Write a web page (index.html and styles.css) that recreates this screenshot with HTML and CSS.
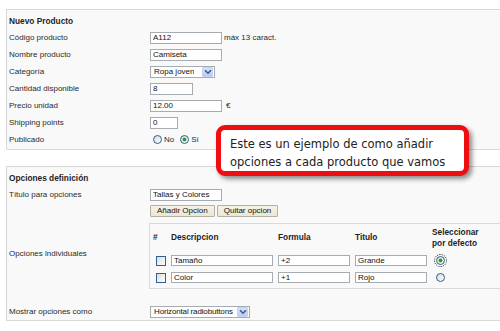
FILE: index.html
```html
<!DOCTYPE html>
<html lang="es">
<head>
<meta charset="utf-8">
<title>Nuevo Producto</title>
<link rel="stylesheet" href="styles.css">
</head>
<body>
<div class="page">
  <section class="panel first">
    <div class="row title">Nuevo Producto</div>
    <div class="row"><span class="label">Código producto</span><span class="field"><input class="inp w72" value="A112"><span class="note">máx 13 caract.</span></span></div>
    <div class="row"><span class="label">Nombre producto</span><span class="field"><input class="inp w72" value="Camiseta"></span></div>
    <div class="row"><span class="label">Categoría</span><span class="field"><span class="select w65"><span class="sel-text">Ropa joven</span><span class="arrow"><svg width="8" height="6" viewBox="0 0 8 6"><path d="M1 1.2 L4 4.2 L7 1.2" fill="none" stroke="#3f5a8c" stroke-width="1.6"/></svg></span></span></span></div>
    <div class="row"><span class="label">Cantidad disponible</span><span class="field"><input class="inp w43" value="8"></span></div>
    <div class="row"><span class="label">Precio unidad</span><span class="field"><input class="inp w72" value="12.00"><span class="note euro">€</span></span></div>
    <div class="row"><span class="label">Shipping points</span><span class="field"><input class="inp w28" value="0"></span></div>
    <div class="row"><span class="label">Publicado</span><span class="field radios"><input type="radio" class="radio" name="pub" id="pno"><label for="pno" class="rlabel">No</label><input type="radio" class="radio" name="pub" id="psi" checked><label for="psi" class="rlabel">Sí</label></span></div>
  </section>

  <section class="panel second">
    <div class="row title">Opciones definición</div>
    <div class="row"><span class="label">Título para opciones</span><span class="field"><input class="inp w72" value="Tallas y Colores"></span></div>
    <div class="row options">
      <span class="label">Opciones individuales</span>
      <div class="field-col">
        <div class="buttons"><button class="btn">Añadir Opcion</button><button class="btn">Quitar opcion</button></div>
        <div class="opt-box">
          <div class="opt-grid">
            <span class="th hash">#</span>
            <span class="th">Descripcion</span>
            <span class="th">Formula</span>
            <span class="th">Titulo</span>
            <span class="th def">Seleccionar<br>por defecto</span>

            <span class="cell"><input type="checkbox" class="chk"></span>
            <span class="cell"><input class="inp small w102" value="Tamaño"></span>
            <span class="cell"><input class="inp small w72" value="+2"></span>
            <span class="cell"><input class="inp small w72" value="Grande"></span>
            <span class="cell"><input type="radio" class="radio focus" name="def" checked></span>

            <span class="cell"><input type="checkbox" class="chk"></span>
            <span class="cell"><input class="inp small w102" value="Color"></span>
            <span class="cell"><input class="inp small w72" value="+1"></span>
            <span class="cell"><input class="inp small w72" value="Rojo"></span>
            <span class="cell"><input type="radio" class="radio" name="def"></span>
          </div>
        </div>
      </div>
    </div>
    <div class="row"><span class="label">Mostrar opciones como</span><span class="field"><span class="select w100"><span class="sel-text tight">Horizontal radiobuttons</span><span class="arrow"><svg width="8" height="6" viewBox="0 0 8 6"><path d="M1 1.2 L4 4.2 L7 1.2" fill="none" stroke="#3f5a8c" stroke-width="1.6"/></svg></span></span></span></div>
  </section>
</div>

<div class="callout">Este es un ejemplo de como añadir<br>opciones a cada producto que vamos</div>
</body>
</html>
```

FILE: styles.css
```css
* { box-sizing: border-box; }
html, body { margin: 0; padding: 0; background: #fff; overflow: hidden; }
body {
  width: 500px;
  height: 331px;
  position: relative;
  font-family: "Liberation Sans", Arial, sans-serif;
  font-size: 8px;
  color: #2a2a2a;
}
.page { padding: 9px 0 0 6px; width: 500px; }
.panel {
  background: #f9f9f9;
  border: 1px solid #d9d9d9;
  border-right: 0;
  padding: 2px 0 1px 2px;
}
.panel.second { margin-top: 16px; padding-bottom: 0; }
.row {
  display: grid;
  grid-template-columns: 141px 1fr;
  align-items: center;
  min-height: 17px;
}
.title { display: flex; font-weight: bold; font-size: 8.3px; color: #1e1e1e; }
.label { white-space: nowrap; }
.field { display: flex; align-items: center; }
.inp {
  height: 12px;
  border: 1px solid #a5acb2;
  background: #fff;
  font: 8px "Liberation Sans", Arial, sans-serif;
  color: #111;
  padding: 0 2px;
  margin: 0;
  outline: none;
}
.inp.small { height: 11px; }
.w72 { width: 72px; }
.w43 { width: 43px; }
.w28 { width: 28px; }
.w102 { width: 102px; }
.w65 { width: 65px; }
.w100 { width: 100px; }
.note { margin-left: 2px; }
.note.euro { margin-left: 4px; }

.select {
  display: flex;
  align-items: center;
  justify-content: space-between;
  height: 12px;
  border: 1px solid #a5acb2;
  background: #fff;
  padding: 0 1px 0 3px;
  color: #111;
}
.sel-text { white-space: nowrap; overflow: hidden; }
.sel-text.tight { letter-spacing: -0.15px; }
.arrow {
  flex: none;
  display: flex;
  align-items: center;
  justify-content: center;
  width: 11px;
  height: 10px;
  margin-left: 2px;
  background: linear-gradient(#d4e0fb, #b9cdf6);
  border: 1px solid #c3d3f3;
  border-radius: 1px;
}

.radios { padding-left: 3px; }
.radio {
  appearance: none;
  -webkit-appearance: none;
  width: 9px;
  height: 9px;
  margin: 0;
  border: 1px solid #2f5f96;
  border-radius: 50%;
  background: linear-gradient(135deg, #d9d9d2, #ffffff);
}
.radio:checked {
  background: radial-gradient(circle, #1ea41e 0 1.5px, rgba(30,164,30,0) 2.3px), linear-gradient(135deg, #d9d9d2, #ffffff);
}
.rlabel { margin: 0 6px 0 2px; }
.radio.focus { outline: 1px dotted #222; outline-offset: 1px; }

.options { align-items: center; }
.field-col { padding: 2px 0 14px 0; }
.buttons { display: flex; gap: 2px; }
.btn {
  height: 12px;
  margin: 0;
  padding: 0 6px;
  font: 8px "Liberation Sans", Arial, sans-serif;
  color: #111;
  background: linear-gradient(#f6f3e6, #ebe7d5);
  border: 1px solid #b3b1a3;
  border-radius: 1px;
  line-height: 10px;
}
.opt-box {
  margin: 6px 0 0 -1px;
  border: 1px solid #d9d9d9;
  border-right: 0;
  background: #f9f9f9;
  padding: 3px 0 5px 3px;
}
.opt-grid {
  display: grid;
  grid-template-columns: 18px 107px 77px 77px auto;
  grid-template-rows: 22px 11px 11px;
  row-gap: 6px;
  align-items: center;
}
.opt-grid .th:nth-child(-n+5) { margin-bottom: 1px; }
.th { font-weight: bold; font-size: 8.3px; color: #1e1e1e; line-height: 11px; }
.cell { display: flex; align-items: center; }
.chk {
  appearance: none;
  -webkit-appearance: none;
  width: 10px;
  height: 10px;
  margin: 0 0 0 3px;
  border: 1px solid #2f5f96;
  background: linear-gradient(135deg, #dcdcd5, #ffffff);
}
.cell .radio { margin-left: 4px; }

.callout {
  position: absolute;
  left: 216px;
  top: 125px;
  width: 253px;
  height: 51px;
  border: 5px solid #ee0d10;
  border-radius: 9px;
  background: #fff;
  box-shadow: 3px 3px 5px rgba(0,0,0,0.45);
  padding: 5px 0 0 9px;
  font-family: "DejaVu Sans", Verdana, sans-serif;
  font-size: 11.5px;
  line-height: 18px;
  color: #222;
  white-space: nowrap;
}
```
